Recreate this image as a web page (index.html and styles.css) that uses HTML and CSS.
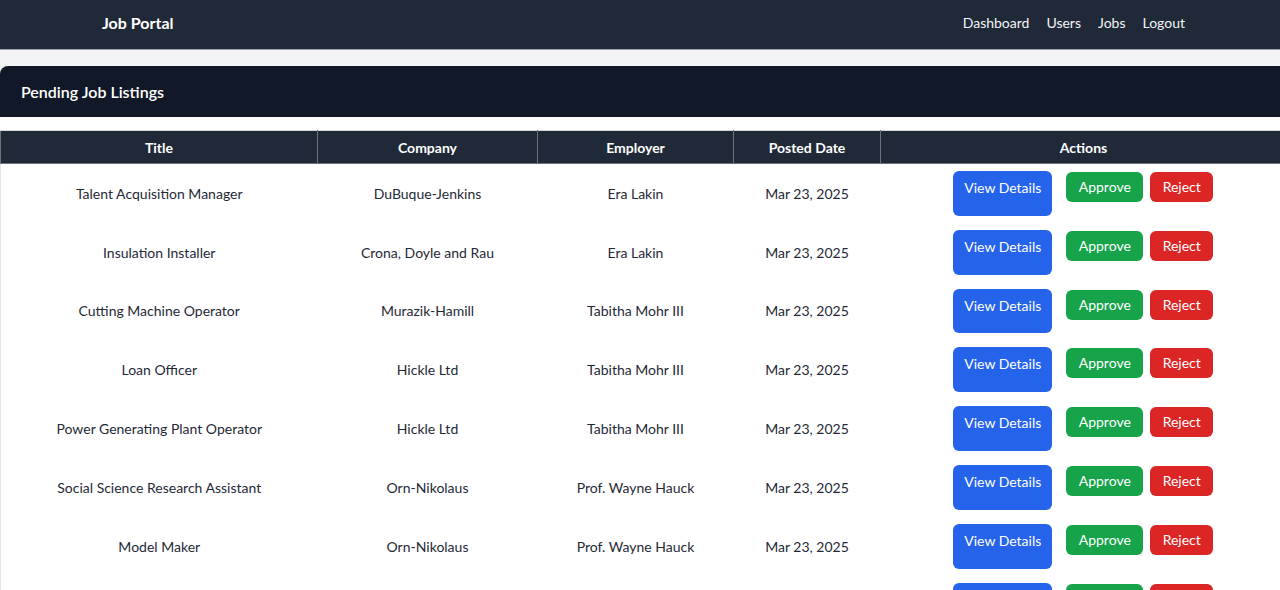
FILE: index.html
```html
<!DOCTYPE html>
<html lang="en">
<head>
<meta charset="utf-8">
<title>Job Portal - Pending Job Listings</title>
<link rel="stylesheet" href="styles.css">
</head>
<body>
<nav class="navbar">
  <a class="brand" href="#">Job Portal</a>
  <ul class="nav-links">
    <li><a href="#">Dashboard</a></li>
    <li><a href="#">Users</a></li>
    <li><a href="#">Jobs</a></li>
    <li><a href="#">Logout</a></li>
  </ul>
</nav>
<main class="main">
  <section class="card">
    <header class="card-header"><h2>Pending Job Listings</h2></header>
    <div class="card-body">
      <table class="jobs">
        <colgroup>
          <col class="c-title"><col class="c-company"><col class="c-employer"><col class="c-date"><col class="c-actions">
        </colgroup>
        <thead>
          <tr><th>Title</th><th>Company</th><th>Employer</th><th>Posted Date</th><th>Actions</th></tr>
        </thead>
        <tbody>
          <tr><td>Talent Acquisition Manager</td><td>DuBuque-Jenkins</td><td>Era Lakin</td><td>Mar 23, 2025</td>
            <td><div class="actions"><a class="btn btn-view" href="#">View Details</a><button class="btn btn-approve">Approve</button><button class="btn btn-reject">Reject</button></div></td></tr>
          <tr><td>Insulation Installer</td><td>Crona, Doyle and Rau</td><td>Era Lakin</td><td>Mar 23, 2025</td>
            <td><div class="actions"><a class="btn btn-view" href="#">View Details</a><button class="btn btn-approve">Approve</button><button class="btn btn-reject">Reject</button></div></td></tr>
          <tr><td>Cutting Machine Operator</td><td>Murazik-Hamill</td><td>Tabitha Mohr III</td><td>Mar 23, 2025</td>
            <td><div class="actions"><a class="btn btn-view" href="#">View Details</a><button class="btn btn-approve">Approve</button><button class="btn btn-reject">Reject</button></div></td></tr>
          <tr><td>Loan Officer</td><td>Hickle Ltd</td><td>Tabitha Mohr III</td><td>Mar 23, 2025</td>
            <td><div class="actions"><a class="btn btn-view" href="#">View Details</a><button class="btn btn-approve">Approve</button><button class="btn btn-reject">Reject</button></div></td></tr>
          <tr><td>Power Generating Plant Operator</td><td>Hickle Ltd</td><td>Tabitha Mohr III</td><td>Mar 23, 2025</td>
            <td><div class="actions"><a class="btn btn-view" href="#">View Details</a><button class="btn btn-approve">Approve</button><button class="btn btn-reject">Reject</button></div></td></tr>
          <tr><td>Social Science Research Assistant</td><td>Orn-Nikolaus</td><td>Prof. Wayne Hauck</td><td>Mar 23, 2025</td>
            <td><div class="actions"><a class="btn btn-view" href="#">View Details</a><button class="btn btn-approve">Approve</button><button class="btn btn-reject">Reject</button></div></td></tr>
          <tr><td>Model Maker</td><td>Orn-Nikolaus</td><td>Prof. Wayne Hauck</td><td>Mar 23, 2025</td>
            <td><div class="actions"><a class="btn btn-view" href="#">View Details</a><button class="btn btn-approve">Approve</button><button class="btn btn-reject">Reject</button></div></td></tr>
          <tr><td>Machine Setter</td><td>Orn-Nikolaus</td><td>Prof. Wayne Hauck</td><td>Mar 23, 2025</td>
            <td><div class="actions"><a class="btn btn-view" href="#">View Details</a><button class="btn btn-approve">Approve</button><button class="btn btn-reject">Reject</button></div></td></tr>
        </tbody>
      </table>
    </div>
  </section>
</main>
</body>
</html>
```
FILE: styles.css
```css
* { box-sizing: border-box; }
html, body { overflow-x: hidden; }
body {
  margin: 0;
  background: #f3f4f6;
  font-family: Lato, "Noto Sans", sans-serif;
  font-size: 14px;
  color: #1f2937;
}
a { text-decoration: none; }

.navbar {
  height: 50px;
  background: #1f2937;
  border-bottom: 1px solid #9ca3af;
  display: flex;
  align-items: center;
  justify-content: space-between;
  padding: 0 95px 4px 102px;
}
.brand {
  color: #fff;
  font-weight: 700;
  font-size: 16px;
}
.nav-links {
  list-style: none;
  margin: 0;
  padding: 0;
  display: flex;
  gap: 17px;
}
.nav-links a {
  color: #f3f4f6;
  font-size: 14px;
}

.main { padding-top: 16px; }
.card {
  width: 1287px;
  background: #fff;
  border-radius: 8px 8px 0 0;
}
.card-header {
  background: #111827;
  height: 51px;
  display: flex;
  align-items: center;
  padding: 0 21px;
  border-radius: 8px 8px 0 0;
}
.card-header h2 {
  margin: 0;
  color: #fff;
  font-size: 16px;
  font-weight: 600;
}
.card-body { padding-top: 13px; }

.jobs {
  width: 100%;
  border-collapse: collapse;
  border: 1px solid #e5e7eb;
  table-layout: fixed;
}
.c-title { width: 317px; }
.c-company { width: 220px; }
.c-employer { width: 196px; }
.c-date { width: 147px; }
.jobs th {
  background: #1f2937;
  color: #fff;
  font-weight: 700;
  height: 33px;
  padding: 1px 8px 0;
  border: 1px solid #6b7280;
  border-top-color: #d1d5db;
  text-align: center;
}
.jobs td {
  text-align: center;
  padding: 7px 8px;
  height: 58.8px;
  vertical-align: middle;
}
.actions {
  display: flex;
  justify-content: center;
  align-items: flex-start;
}
.btn {
  display: inline-block;
  border: 0;
  color: #fff;
  font-family: inherit;
  font-size: 14px;
  line-height: 20px;
  border-radius: 6px;
  cursor: pointer;
  text-align: center;
}
.btn-view {
  background: #2563eb;
  width: 99px;
  height: 44.8px;
  padding-top: 7px;
  margin-right: 14px;
}
.btn-approve {
  background: #16a34a;
  width: 77px;
  height: 30px;
  margin-top: 1px;
  margin-right: 7px;
  padding: 5px 0;
}
.btn-reject {
  background: #dc2626;
  width: 63px;
  height: 30px;
  margin-top: 1px;
  padding: 5px 0;
}
```
